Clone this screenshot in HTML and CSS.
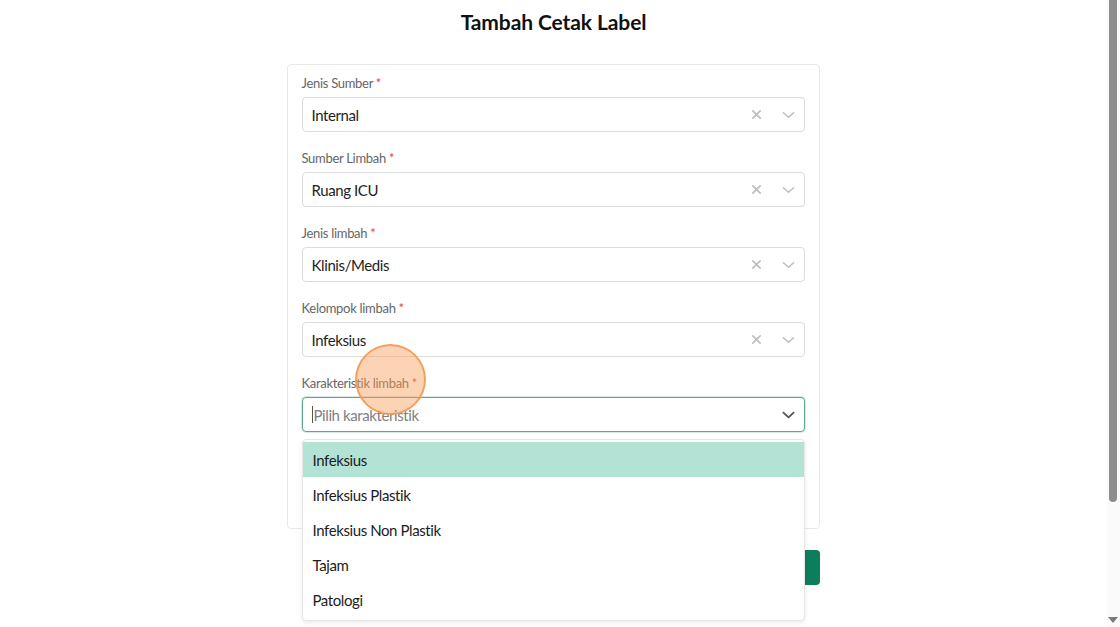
FILE: index.html
```html
<!DOCTYPE html>
<html lang="id">
<head>
<meta charset="utf-8">
<title>Tambah Cetak Label</title>
<link rel="stylesheet" href="styles.css">
</head>
<body>
<main class="page">
  <h1 class="title">Tambah Cetak Label</h1>
  <div class="form-wrap">
    <form class="card">
      <div class="field">
        <label class="label">Jenis Sumber <span class="req">*</span></label>
        <div class="select">
          <span class="value">Internal</span>
          <span class="icons">
            <svg class="ico clear" viewBox="0 0 12 12"><path d="M2 2L10 10M10 2L2 10"/></svg>
            <svg class="ico chev" viewBox="0 0 14 8"><path d="M1.5 1.5L7 6.5L12.5 1.5"/></svg>
          </span>
        </div>
      </div>
      <div class="field">
        <label class="label">Sumber Limbah <span class="req">*</span></label>
        <div class="select">
          <span class="value">Ruang ICU</span>
          <span class="icons">
            <svg class="ico clear" viewBox="0 0 12 12"><path d="M2 2L10 10M10 2L2 10"/></svg>
            <svg class="ico chev" viewBox="0 0 14 8"><path d="M1.5 1.5L7 6.5L12.5 1.5"/></svg>
          </span>
        </div>
      </div>
      <div class="field">
        <label class="label">Jenis limbah <span class="req">*</span></label>
        <div class="select">
          <span class="value">Klinis/Medis</span>
          <span class="icons">
            <svg class="ico clear" viewBox="0 0 12 12"><path d="M2 2L10 10M10 2L2 10"/></svg>
            <svg class="ico chev" viewBox="0 0 14 8"><path d="M1.5 1.5L7 6.5L12.5 1.5"/></svg>
          </span>
        </div>
      </div>
      <div class="field">
        <label class="label">Kelompok limbah <span class="req">*</span></label>
        <div class="select">
          <span class="value">Infeksius</span>
          <span class="icons">
            <svg class="ico clear" viewBox="0 0 12 12"><path d="M2 2L10 10M10 2L2 10"/></svg>
            <svg class="ico chev" viewBox="0 0 14 8"><path d="M1.5 1.5L7 6.5L12.5 1.5"/></svg>
          </span>
        </div>
      </div>
      <div class="field field-open">
        <label class="label">Karakteristik limbah <span class="req">*</span></label>
        <div class="select focused">
          <span class="caret"></span><span class="placeholder">Pilih karakteristik</span>
          <span class="icons">
            <svg class="ico chev dark" viewBox="0 0 14 8"><path d="M1.5 1.5L7 6.5L12.5 1.5"/></svg>
          </span>
        </div>
        <ul class="menu">
          <li class="opt active">Infeksius</li>
          <li class="opt">Infeksius Plastik</li>
          <li class="opt">Infeksius Non Plastik</li>
          <li class="opt">Tajam</li>
          <li class="opt">Patologi</li>
        </ul>
      </div>
    </form>
    <div class="actions">
      <button type="button" class="btn">Simpan</button>
    </div>
  </div>
  <div class="click-mark"></div>
</main>
<div class="scrollbar"><div class="thumb"></div><div class="arrow"></div></div>
</body>
</html>
```

FILE: styles.css
```css
* { box-sizing: border-box; }
html, body { margin: 0; padding: 0; background: #fff; height: 100%; overflow: hidden; }
body { font-family: Lato, "Open Sans", "Liberation Sans", sans-serif; color: #222; }

.page {
  position: relative;
  display: flex;
  flex-direction: column;
  align-items: center;
  padding-right: 13px;
}

.title {
  margin: 8px 0 0 0;
  font-size: 21px;
  line-height: 28px;
  font-weight: 700;
  color: #111;
  letter-spacing: -0.1px;
}

.form-wrap {
  width: 533px;
  margin-top: 28px;
  margin-left: -1px;
}

.card {
  border: 1px solid #e8e8e8;
  border-radius: 4px;
  padding: 10px 14px 0 14px;
  display: flex;
  flex-direction: column;
  gap: 18px;
  height: 465px;
}

.field { display: flex; flex-direction: column; position: relative; }

.label {
  font-size: 13px;
  line-height: 16px;
  color: #666;
  margin-bottom: 6px;
  letter-spacing: -0.3px;
}
.req { color: #e0454f; }

.select {
  height: 35px;
  border: 1px solid #dcdcdc;
  border-radius: 4px;
  display: flex;
  align-items: center;
  padding: 0 9px 0 9px;
  font-size: 15px;
  letter-spacing: -0.4px;
  color: #1e1e1e;
  background: #fff;
}
.select .value { flex: 1; }
.select .placeholder { flex: 1; color: #808080; }
.select.focused { border-color: #5ea88c; box-shadow: 0 0 0 1px rgba(94,168,140,0.25); }

.caret {
  width: 1px;
  height: 17px;
  background: #555;
  margin-right: 1px;
}

.icons { display: flex; align-items: center; gap: 20px; }
.ico { fill: none; stroke-linecap: round; stroke-linejoin: round; }
.clear { width: 11px; height: 11px; stroke: #bdbdbd; stroke-width: 1.8; }
.chev { width: 13px; height: 8px; stroke: #bdbdbd; stroke-width: 1.6; margin-right: 0; }
.chev.dark { stroke: #555; stroke-width: 2; }

.menu {
  position: absolute;
  top: 64px;
  left: 0;
  right: 0;
  margin: 0;
  padding: 2px 0 3px 0;
  list-style: none;
  background: #fff;
  border: 1px solid #e6e6e6;
  border-radius: 4px;
  box-shadow: 0 2px 4px rgba(0,0,0,0.08);
  z-index: 5;
}
.opt {
  height: 35px;
  display: flex;
  align-items: center;
  padding-left: 10px;
  font-size: 15px;
  letter-spacing: -0.4px;
  color: #1c1c1c;
}
.opt.active { background: #b3e3d5; }

.actions { display: flex; justify-content: flex-end; margin-top: 21px; }
.btn {
  height: 35px;
  padding: 0 18px;
  border: none;
  border-radius: 4px;
  background: #0b7e5c;
  color: #fff;
  font-family: inherit;
  font-size: 15px;
}

.click-mark {
  position: absolute;
  left: 355px;
  top: 344px;
  width: 71px;
  height: 71px;
  border-radius: 50%;
  background: rgba(248, 160, 90, 0.45);
  border: 2px solid rgba(243, 150, 75, 0.85);
  z-index: 10;
}

.scrollbar {
  position: fixed;
  top: 0;
  right: 0;
  width: 13px;
  height: 627px;
  background: #fafafa;
}
.thumb {
  position: absolute;
  left: 2px;
  top: 0;
  width: 8px;
  height: 502px;
  background: #8d8d8d;
  border-radius: 0 0 4px 4px;
}
.arrow {
  position: absolute;
  left: 1px;
  bottom: 4px;
  width: 0;
  height: 0;
  border-left: 5px solid transparent;
  border-right: 5px solid transparent;
  border-top: 6px solid #7a7a7a;
}
```
